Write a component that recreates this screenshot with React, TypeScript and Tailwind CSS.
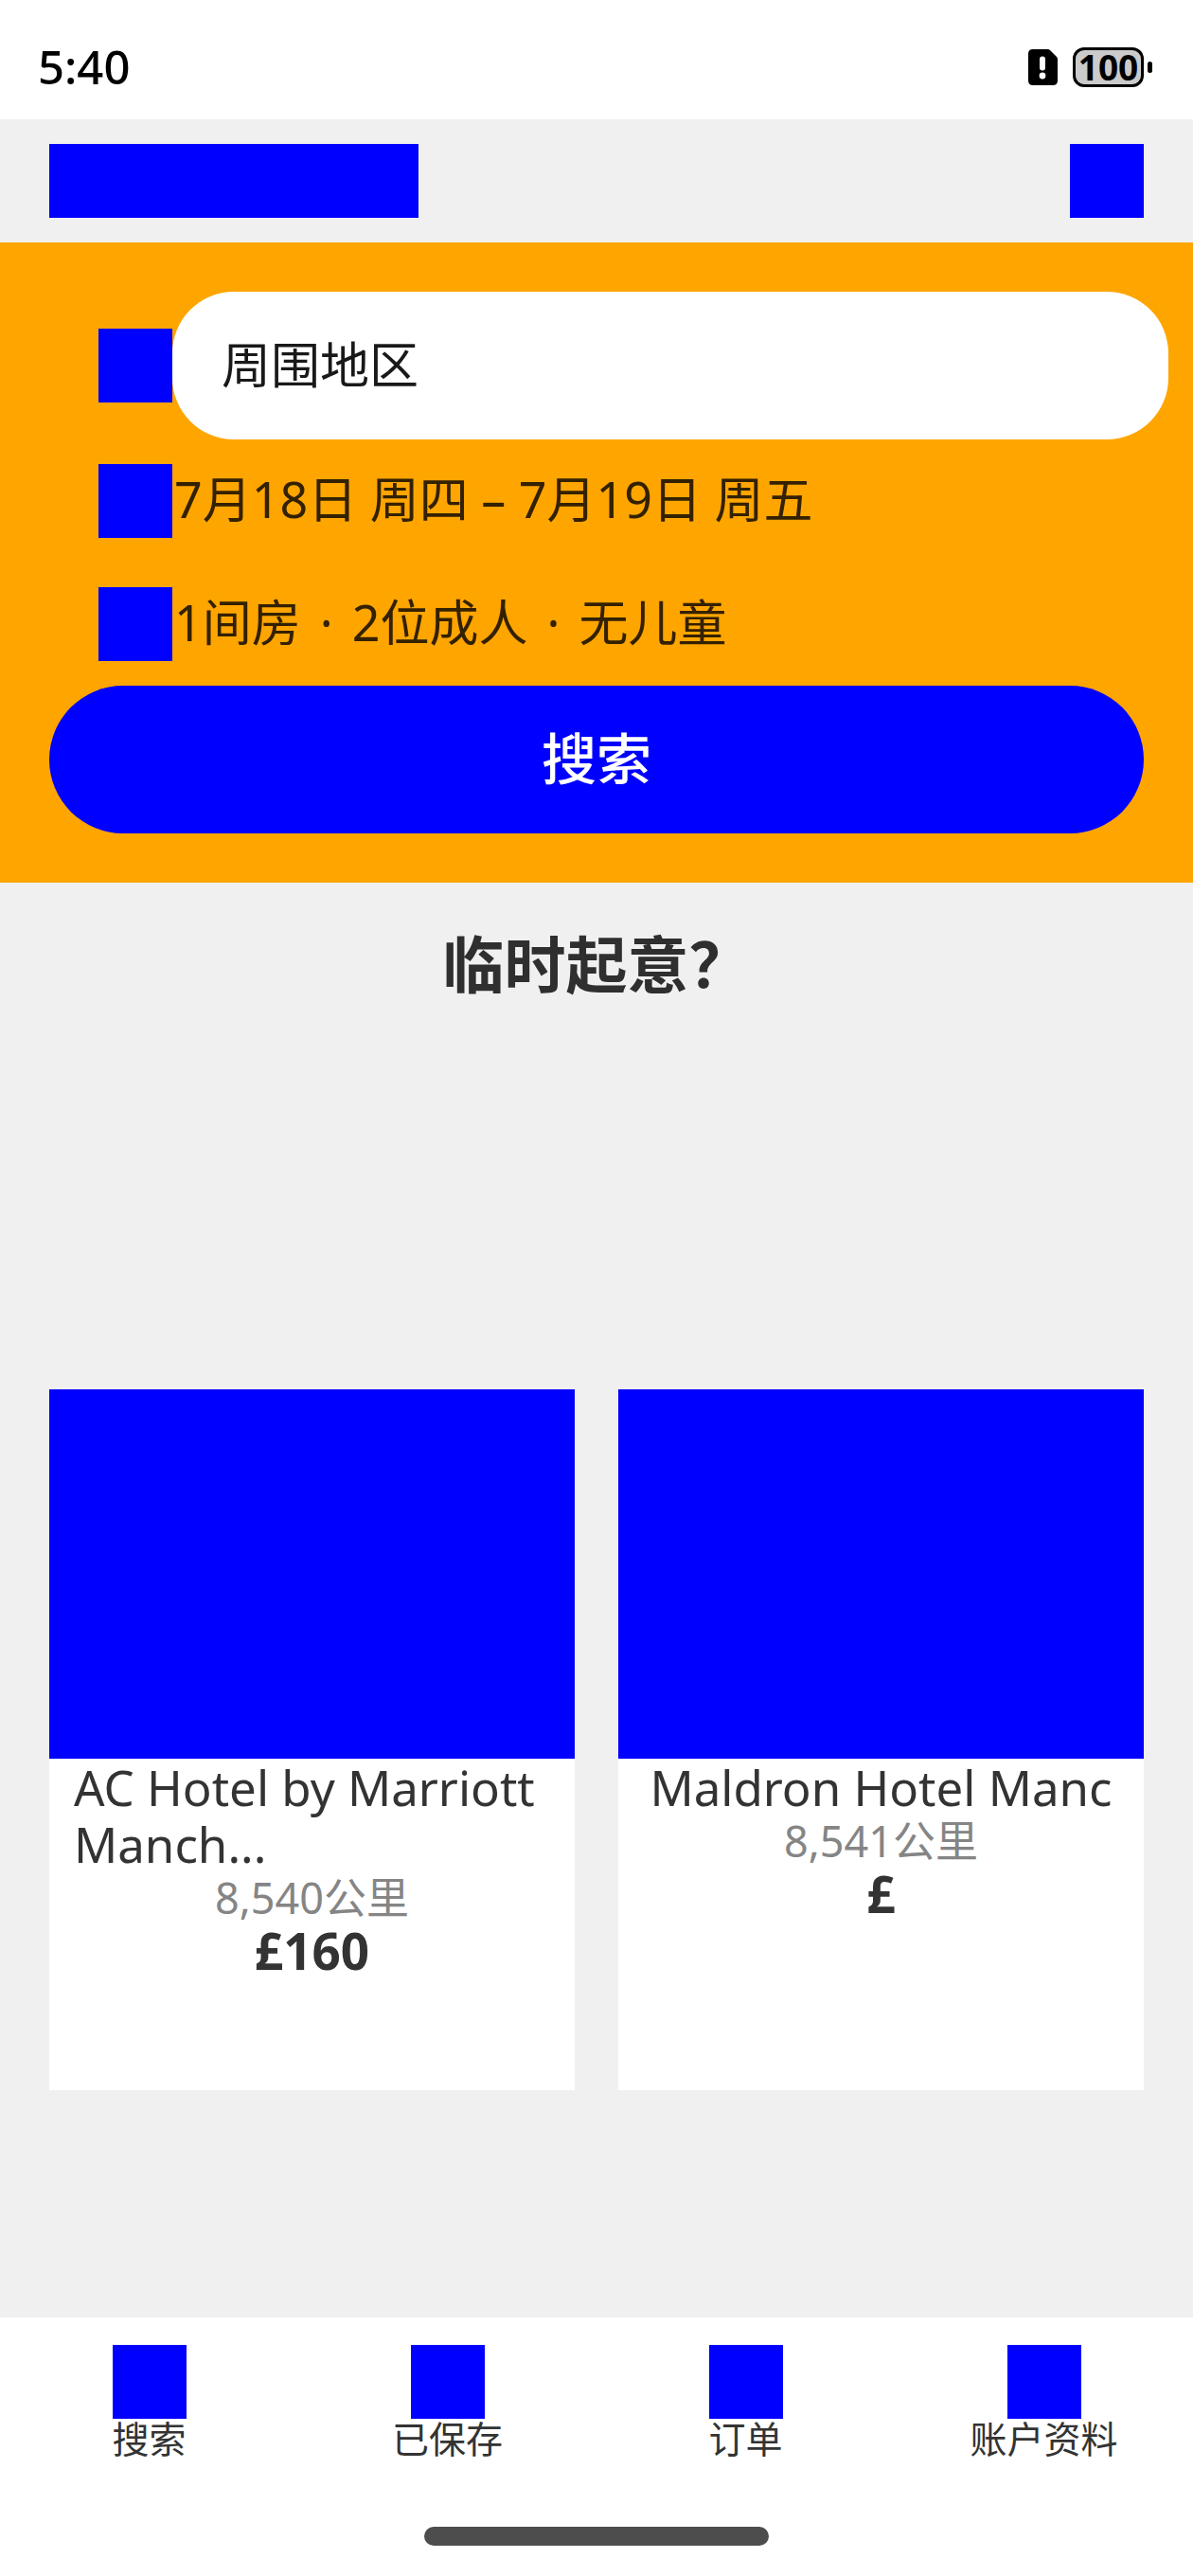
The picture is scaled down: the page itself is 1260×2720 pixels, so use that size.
import { useState } from "react";

type Hotel = { name: string; distance: string; price: string };

const hotels: Hotel[] = [
  { name: "AC Hotel by Marriott Manch...", distance: "8,540公里", price: "£160" },
  { name: "Maldron Hotel Manc", distance: "8,541公里", price: "£" },
];

const tabs = ["搜索", "已保存", "订单", "账户资料"];

function Tile() {
  return <span aria-hidden="true" className="block size-[78px] shrink-0 bg-[#0000ff]" />;
}

function StatusBar() {
  return (
    <div className="flex h-[126px] items-center justify-between bg-white pt-4 pr-[43px] pl-10 text-black">
      <span className="pb-0.5 text-[49px] leading-none font-medium">5:40</span>
      <div className="flex items-center gap-4">
        <svg width="31" height="38" viewBox="0 0 31 38" aria-hidden="true">
          <path
            d="M5 0H20.500Q22 0 23 1L30 8Q31 9 31 10.500V33Q31 38 26 38H5Q0 38 0 33V5Q0 0 5 0Z"
            fill="#000"
          />
          <rect x="12" y="7.500" width="6" height="15" rx="3" fill="#fff" />
          <circle cx="15" cy="28" r="3.400" fill="#fff" />
        </svg>
        <div className="flex items-center gap-1">
          <span className="flex h-[42px] w-[75px] items-center justify-center rounded-[12px] border-[3px] border-black bg-[#cbcbcb] pb-0.5 text-[37px] leading-none font-bold">
            100
          </span>
          <span className="h-3 w-[5px] rounded-full bg-black" />
        </div>
      </div>
    </div>
  );
}

function HotelCard({ name, distance, price }: Hotel) {
  return (
    <article className="flex h-[740px] flex-1 flex-col items-center bg-white">
      <div className="h-[390px] w-full bg-[#0000ff]" />
      <h2 className="mx-[26px] text-[51px] leading-[60px] text-[#333333]">{name}</h2>
      <p className="text-[45px] leading-[53px] text-[#858585]">{distance}</p>
      <p className="text-[53px] leading-[60px] font-bold text-[#333333]">{price}</p>
    </article>
  );
}

export default function App() {
  const [place, setPlace] = useState("周围地区");
  return (
    <div
      lang="zh-CN"
      className="flex min-h-screen flex-col bg-[#f0f0f0] font-['Noto_Sans','Noto_Sans_CJK_SC',sans-serif]"
    >
      <StatusBar />
      <header className="flex items-center justify-between px-[52px] py-[26px]">
        <div className="h-[78px] w-[390px] bg-[#0000ff]" />
        <button type="button" aria-label="消息">
          <Tile />
        </button>
      </header>

      <form className="bg-[#ffa500] py-[52px]" onSubmit={(e) => e.preventDefault()}>
        <div className="flex items-center pr-[26px] pl-[104px]">
          <Tile />
          <input
            aria-label="目的地"
            value={place}
            onChange={(e) => setPlace(e.target.value)}
            className="h-[156px] min-w-0 flex-1 rounded-[65px] bg-white px-[52px] pb-2 text-[52px] text-[#191919] outline-none"
          />
        </div>
        <button
          type="button"
          className="flex h-[130px] w-full items-center gap-0.5 pl-[104px] text-[52px] text-[#332100]"
        >
          <Tile />
          <span className="pb-1">7月18日 周四 – 7月19日 周五</span>
        </button>
        <button
          type="button"
          className="flex h-[130px] w-full items-center gap-0.5 pl-[104px] text-[52px] text-[#332100]"
        >
          <Tile />
          <span className="flex pb-1">
            <span>1间房</span>
            <span className="w-[54px] text-center">·</span>
            <span>2位成人</span>
            <span className="w-[54px] text-center">·</span>
            <span>无儿童</span>
          </span>
        </button>
        <div className="px-[52px]">
          <button
            type="submit"
            className="h-[156px] w-full rounded-full bg-[#0000ff] pb-1 text-[58px] font-medium text-white"
          >
            搜索
          </button>
        </div>
      </form>

      <main className="flex-1">
        <h1 className="pt-12 text-center text-[65px] leading-[76px] font-bold text-[#2f2f2f]">
          临时起意？
        </h1>
        <div className="mt-[411px] flex gap-[46px] px-[52px]">
          {hotels.map((hotel) => (
            <HotelCard key={hotel.name} {...hotel} />
          ))}
        </div>
      </main>

      <footer className="bg-white">
        <nav className="grid grid-cols-4 pt-[29px]">
          {tabs.map((tab) => (
            <button
              key={tab}
              type="button"
              className="flex flex-col items-center text-[39px] leading-[42px] text-[#333333]"
            >
              <Tile />
              {tab}
            </button>
          ))}
        </nav>
        <div className="flex justify-center pt-[72px] pb-8">
          <div className="h-5 w-[364px] rounded-full bg-[#4d4d4d]" />
        </div>
      </footer>
    </div>
  );
}
